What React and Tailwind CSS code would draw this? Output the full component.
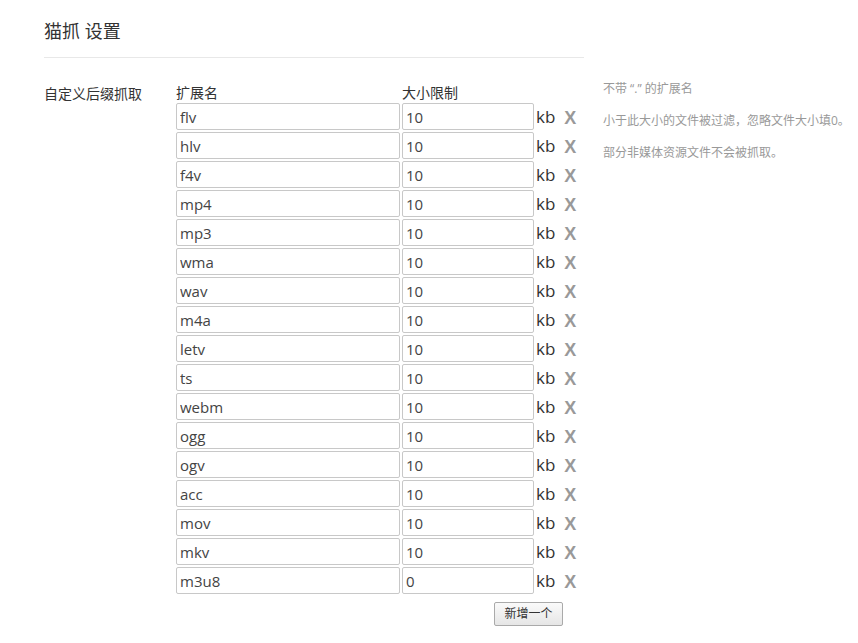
const rows = [
  ["flv", "10"],
  ["hlv", "10"],
  ["f4v", "10"],
  ["mp4", "10"],
  ["mp3", "10"],
  ["wma", "10"],
  ["wav", "10"],
  ["m4a", "10"],
  ["letv", "10"],
  ["ts", "10"],
  ["webm", "10"],
  ["ogg", "10"],
  ["ogv", "10"],
  ["acc", "10"],
  ["mov", "10"],
  ["mkv", "10"],
  ["m3u8", "0"],
];

const App = () => {
  return (
    <div className="min-h-[643px] bg-white pl-[44px] pt-[19px] text-[#333] font-['Open_Sans','Noto_Sans_CJK_SC',sans-serif]">
      <h1 className="text-[18px] leading-[24px] font-normal">猫抓 设置</h1>
      <div className="w-[540px] h-px bg-[#e8e8e8] mt-[14px]" />
      <div className="flex mt-[25px]">
        <div className="w-[132px] shrink-0 text-[14px] leading-[20px] pt-[1px]">自定义后缀抓取</div>
        <div className="w-[427px] shrink-0">
          <div className="flex text-[14px] leading-[20px]">
            <div className="w-[226px]">扩展名</div>
            <div>大小限制</div>
          </div>
          <div className="flex flex-col gap-[2px]">
            {rows.map(([ext, size]) => (
              <div key={ext} className="flex items-center">
                <input
                  defaultValue={ext}
                  className="w-[224px] h-[27px] border border-[#c8c8c8] rounded-[2px] px-[3px] text-[15px] text-[#444] outline-none"
                />
                <input
                  defaultValue={size}
                  className="ml-[2px] w-[132px] h-[27px] border border-[#c8c8c8] rounded-[2px] px-[3px] text-[15px] text-[#444] outline-none"
                />
                <span className="ml-[2px] text-[17px] leading-[20px] text-[#333]">kb</span>
                <span className="ml-[9px] mt-[3px] text-[18px] leading-[20px] font-bold text-[#999] font-['Liberation_Sans',sans-serif]">X</span>
              </div>
            ))}
          </div>
          <button className="ml-[318px] mt-[8px] w-[69px] h-[24px] border border-[#aaa] rounded-[2px] bg-gradient-to-b from-[#fafafa] to-[#e6e6e6] text-[12px] text-[#333]">
            新增一个
          </button>
        </div>
        <div className="shrink-0 whitespace-nowrap text-[12px] leading-[16px] text-[#999] -mt-[2px]">
          <p>不带 “.” 的扩展名</p>
          <p className="mt-[16px]">小于此大小的文件被过滤，忽略文件大小填0。</p>
          <p className="mt-[16px]">部分非媒体资源文件不会被抓取。</p>
        </div>
      </div>
    </div>
  );
};

export default App;
